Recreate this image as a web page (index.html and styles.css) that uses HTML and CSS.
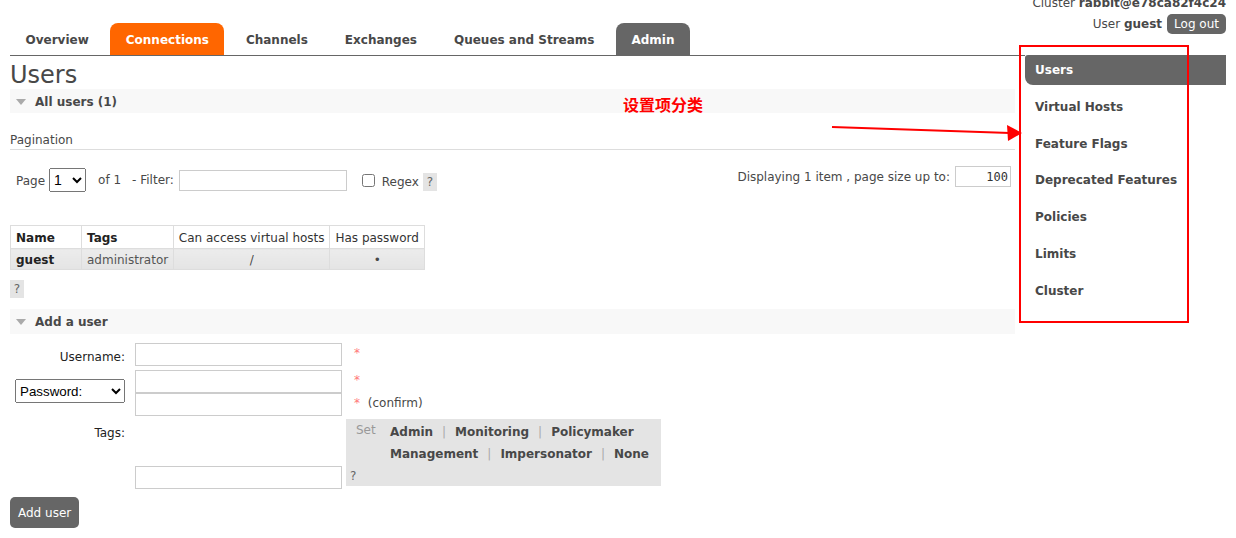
FILE: index.html
```html
<!DOCTYPE html>
<html lang="en">
<head>
<meta charset="utf-8">
<title>RabbitMQ Management - Users</title>
<link rel="stylesheet" href="styles.css">
</head>
<body>
<div class="page">
  <div class="header">
    <ul class="tabs">
      <li class="tab">Overview</li>
      <li class="tab tab-orange">Connections</li>
      <li class="tab">Channels</li>
      <li class="tab">Exchanges</li>
      <li class="tab">Queues and Streams</li>
      <li class="tab tab-gray">Admin</li>
    </ul>
    <div class="userinfo">
      <div class="cluster">Cluster <b>rabbit@e78ca82f4c24</b></div>
      <div class="userline"><span>User <b>guest</b></span><button class="logout">Log out</button></div>
    </div>
  </div>

  <div class="main">
    <div class="content">
      <h1 class="title">Users</h1>
      <div class="section-h"><span class="tri"></span>All users (1)</div>

      <h3 class="pag-title">Pagination</h3>
      <div class="pag-row">
        <div class="pag-left">
          <span>Page</span>
          <select class="page-sel"><option>1</option></select>
          <span class="of">of 1</span>
          <span class="flt">- Filter:</span>
          <input class="filter" type="text">
          <input class="chk" type="checkbox">
          <span class="regex">Regex</span>
          <span class="help">?</span>
        </div>
        <div class="pag-right">
          <span>Displaying 1 item , page size up to:</span>
          <input class="psize" type="text" value="100">
        </div>
      </div>

      <table class="list">
        <thead>
          <tr>
            <th class="c-name">Name</th>
            <th class="c-tags">Tags</th>
            <th class="c-vh plain">Can access virtual hosts</th>
            <th class="c-pw plain">Has password</th>
          </tr>
        </thead>
        <tbody>
          <tr>
            <td class="bold">guest</td>
            <td class="muted">administrator</td>
            <td class="center">/</td>
            <td class="center">•</td>
          </tr>
        </tbody>
      </table>
      <div class="help-row"><span class="help">?</span></div>

      <div class="section-h section-add"><span class="tri"></span>Add a user</div>

      <div class="form">
        <label class="lbl r1">Username:</label>
        <input class="txt r1-in" type="text">
        <span class="mand">*</span>

        <div class="lbl pw-cell"><select class="pw-sel"><option>Password:</option></select></div>
        <input class="txt" type="password">
        <span class="mand">*</span>
        <input class="txt r3-in" type="password">
        <span class="mand">* <span class="confirm">(confirm)</span></span>

        <label class="lbl tags-lbl">Tags:</label>
        <input class="txt tags-in" type="text">
        <div class="tagbox">
          <div class="tagtop">
            <span class="set">Set</span>
            <div class="taglinks">
              <div>Admin<span class="sep">|</span>Monitoring<span class="sep">|</span>Policymaker</div>
              <div>Management<span class="sep">|</span>Impersonator<span class="sep">|</span>None</div>
            </div>
          </div>
          <div class="tag-help">?</div>
        </div>
      </div>
      <button class="add-btn">Add user</button>
    </div>

    <ul class="sidebar">
      <li class="side-item selected">Users</li>
      <li class="side-item">Virtual Hosts</li>
      <li class="side-item">Feature Flags</li>
      <li class="side-item">Deprecated Features</li>
      <li class="side-item">Policies</li>
      <li class="side-item">Limits</li>
      <li class="side-item">Cluster</li>
    </ul>
  </div>

  <div class="annot-text">设置项分类</div>
  <div class="annot-box"></div>
  <svg class="annot-arrow" width="200" height="30" viewBox="0 0 200 30">
    <line x1="2" y1="9" x2="180" y2="15" stroke="#ff0000" stroke-width="2.2"/>
    <polygon points="177,7 192,15 178,23" fill="#ff0000"/>
  </svg>
</div>
</body>
</html>
```

FILE: styles.css
```css
* { box-sizing: border-box; }

body {
  margin: 0;
  font: 12px "DejaVu Sans", Verdana, sans-serif;
  color: #484848;
  background: #fff;
  overflow: hidden;
}

.page {
  position: relative;
  padding: 0 10px;
}

/* header */
.header {
  display: flex;
}

.tabs {
  flex: 1;
  display: flex;
  list-style: none;
  margin: 0;
  padding: 23px 0 0 0;
  border-bottom: 1px solid #666;
}

.tab {
  padding: 10px 15.5px 8px;
  line-height: 14px;
  font-weight: bold;
  margin-right: 6px;
  border-radius: 8px 8px 0 0;
  color: #484848;
}

.tab-orange { background: #f60; color: #fff; }
.tab-gray { background: #666; color: #fff; }

.userinfo {
  width: 201px;
  text-align: right;
}

.cluster {
  margin-top: -4px;
  line-height: 14px;
  white-space: nowrap;
}

.userline {
  margin-top: 4px;
  display: flex;
  justify-content: flex-end;
  align-items: center;
  gap: 5px;
}

.logout {
  height: 20px;
  padding: 0 7px;
  border: 0;
  border-radius: 5px;
  background: #666;
  color: #fff;
  font: 12px "DejaVu Sans", Verdana, sans-serif;
}

/* layout */
.main {
  display: flex;
  align-items: flex-start;
}

.content {
  flex: 1;
  margin-right: 10px;
}

.sidebar {
  width: 201px;
  list-style: none;
  margin: -1px 0 0 0;
  padding: 0;
}

.side-item {
  padding: 8px 10px;
  line-height: 14px;
  font-weight: bold;
  margin-bottom: 6.8px;
  color: #484848;
}

.side-item.selected {
  background: #666;
  color: #fff;
  border-radius: 3px 0 0 8px;
}

/* content */
.title {
  margin: 6px 0 0 0;
  font-size: 24px;
  font-weight: normal;
  line-height: 27px;
  color: #484848;
}

.section-h {
  height: 24px;
  line-height: 24px;
  padding-top: 1px;
  background: #f8f8f8;
  font-weight: bold;
  display: flex;
  align-items: center;
}

.tri {
  display: inline-block;
  width: 0;
  height: 0;
  border-left: 5px solid transparent;
  border-right: 5px solid transparent;
  border-top: 6px solid #aaa;
  margin: 0 9px 0 6px;
}

.pag-title {
  margin: 19px 0 0 0;
  font-size: 12px;
  font-weight: normal;
  line-height: 14px;
  padding-top: 1px;
  padding-bottom: 2px;
  border-bottom: 1px solid #ddd;
}

.pag-row {
  margin-top: 16px;
  height: 26px;
  display: flex;
  justify-content: space-between;
  align-items: flex-start;
  padding-right: 4px;
}

.pag-left {
  display: flex;
  align-items: center;
  padding-left: 6px;
  padding-top: 2px;
}

.pag-left > span:first-child { margin-top: 2px; }

.page-sel {
  margin-left: 4px;
  width: 37px;
  height: 24px;
  font: 14px "Liberation Sans", Arial, sans-serif;
}

.of { margin-left: 12px; }
.flt { margin-left: 11px; }

.filter {
  margin-left: 5px;
  width: 168px;
  height: 21px;
  border: 1px solid #ccc;
}

.chk {
  margin: 0 0 0 15px;
  width: 13px;
  height: 13px;
}

.regex { margin-left: 7px; margin-top: 4px; }

.help {
  display: inline-block;
  width: 14px;
  height: 18px;
  line-height: 18px;
  text-align: center;
  background: #e4e4e4;
  color: #666;
}

.pag-left .help { margin-left: 4px; margin-top: 4px; }

.pag-right {
  display: flex;
  align-items: center;
}

.psize {
  margin-left: 5px;
  width: 56px;
  height: 21px;
  border: 1px solid #ccc;
  text-align: right;
  padding-right: 2px;
  font: 12px "DejaVu Sans Mono", monospace;
  color: #333;
}

/* table */
.list {
  margin-top: 33px;
  border-collapse: collapse;
  table-layout: fixed;
}

.list th,
.list td {
  border: 1px solid #ddd;
  padding: 1px 5px 0;
  white-space: nowrap;
}

.list th {
  height: 23px;
  text-align: left;
  background: #fff;
  color: #222;
}

.list th.plain {
  font-weight: normal;
  text-align: center;
  padding: 1px 3px 0;
  color: #333;
}

.c-name { width: 71px; }
.c-tags { width: 92px; }
.c-vh { width: 156px; }
.c-pw { width: 95px; }

.list td {
  height: 21px;
  background: linear-gradient(#ececec, #e4e4e4);
}

.list td.bold { font-weight: bold; color: #222; }
.list td.muted { color: #555; }
.list td.center { text-align: center; }

.help-row {
  margin-top: 10px;
  height: 18px;
}

.section-add {
  margin-top: 11px;
  height: 25px;
}

/* form */
.form {
  margin-top: 9px;
  display: grid;
  grid-template-columns: 125px 207px auto;
  align-items: start;
}

.lbl {
  padding-right: 10px;
  text-align: right;
  align-self: center;
  color: #222;
}

.txt {
  width: 207px;
  height: 23px;
  border: 1px solid #ccc;
  display: block;
}

.r1-in { margin-bottom: 4px; }
.r3-in { margin-bottom: 3px; }

.mand {
  padding: 3px 0 0 12px;
  line-height: 14px;
  color: #f77;
}

.confirm {
  margin-left: 4px;
  color: #484848;
}

.pw-cell {
  grid-row: span 2;
  align-self: start;
  margin-top: 9px;
  display: flex;
  justify-content: flex-end;
}

.pw-sel {
  width: 110px;
  height: 24px;
  font: 13.33px "Liberation Sans", Arial, sans-serif;
}

.tags-lbl {
  align-self: start;
  padding-top: 7px;
}

.tags-in {
  align-self: end;
  height: 23px;
}

.tagbox {
  margin: 0 0 3px 4px;
  width: 315px;
  height: 67px;
  background: #e4e4e4;
  padding: 2px 4px 3px 4px;
}

.tagtop {
  display: flex;
  padding-left: 6px;
}

.set {
  width: 34px;
  padding-top: 2px;
  line-height: 14px;
  color: #999;
}

.taglinks {
  line-height: 22px;
  font-weight: bold;
  color: #484848;
}

.sep {
  font-weight: normal;
  color: #aaa;
  margin: 0 9px;
}

.tag-help {
  margin-top: 4px;
  line-height: 14px;
  color: #666;
}

.add-btn {
  margin-top: 8px;
  height: 31px;
  padding: 0 8px;
  border: 0;
  border-radius: 5px;
  background: #666;
  color: #fff;
  font: 12px "DejaVu Sans", Verdana, sans-serif;
}

/* annotations */
.annot-text {
  position: absolute;
  left: 623px;
  top: 96px;
  font: bold 16px "Noto Sans CJK SC", sans-serif;
  line-height: 16px;
  color: #f00;
}

.annot-box {
  position: absolute;
  left: 1019px;
  top: 45px;
  width: 170px;
  height: 278px;
  border: 2px solid #f00;
}

.annot-arrow {
  position: absolute;
  left: 830px;
  top: 118px;
}
```
